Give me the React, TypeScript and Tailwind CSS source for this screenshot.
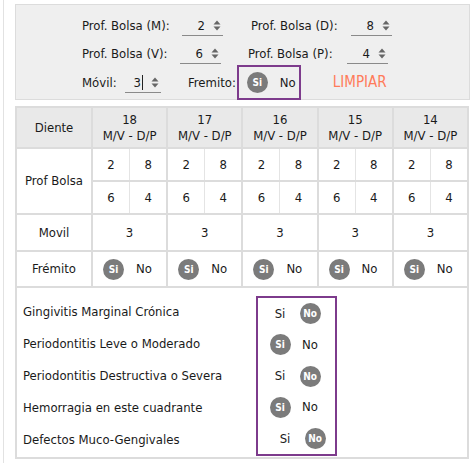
import React from "react";

const FONT = { fontFamily: '"DejaVu Sans Condensed", "DejaVu Sans", "Liberation Sans", sans-serif' };

const Spinner = () => (
  <svg width="8" height="11" viewBox="0 0 8 11" className="shrink-0">
    <path d="M4 0.5 L7.5 4.5 H0.5 Z" fill="#666" />
    <path d="M4 10.5 L7.5 6.5 H0.5 Z" fill="#666" />
  </svg>
);

const NumInput = ({ value, width, caret }: { value: string; width: string; caret?: boolean }) => (
  <div className={`flex items-center justify-end gap-[8px] border-b border-[#8a8a8a] h-[20px] pr-[2px] ${width}`}>
    <span className="flex items-center">
      {value}
      {caret && <span className="inline-block w-[1px] h-[15px] bg-[#222] ml-[1px]" />}
    </span>
    <Spinner />
  </div>
);

const Dot = ({ label }: { label: string }) => (
  <span className="w-[21px] h-[21px] rounded-full bg-[#7b7b7b] text-white text-[10px] font-bold flex items-center justify-center">
    {label}
  </span>
);

// Si / No toggle: the chosen option is drawn inside a grey disc
const SiNo = ({ value, cell = "w-[30px]" }: { value: "si" | "no"; cell?: string }) => (
  <div className="flex items-center">
    <span className={`${cell} flex justify-center`}>{value === "si" ? <Dot label="Si" /> : "Si"}</span>
    <span className={`${cell} flex justify-center`}>{value === "no" ? <Dot label="No" /> : "No"}</span>
  </div>
);

const teeth = ["18", "17", "16", "15", "14"];

const diagnosticos: { label: string; value: "si" | "no"; shift?: boolean }[] = [
  { label: "Gingivitis Marginal Crónica", value: "no" },
  { label: "Periodontitis Leve o Moderado", value: "si" },
  { label: "Periodontitis Destructiva o Severa", value: "no" },
  { label: "Hemorragia en este cuadrante", value: "si" },
  { label: "Defectos Muco-Gengivales", value: "no", shift: true },
];

export default function App() {
  return (
    <div className="bg-white min-h-[463px] w-[474px] text-[13px] text-[#1a1a1a]" style={FONT}>
      <div className="ml-[3px] border-l border-[#e2e2e2] pl-[11px] pt-[4px] pb-[5px] w-[467px]">
        {/* filtros */}
        <div className="bg-[#efefef] border border-[#dcdcdc] w-[455px] h-[96px] pl-[66px] pt-[10px] flex flex-col">
          <div className="flex items-center h-[22px]">
            <span className="w-[90px]">Prof. Bolsa (M):</span>
            <div className="ml-[10px]"><NumInput value="2" width="w-[41px]" /></div>
            <span className="ml-[28px] w-[90px]">Prof. Bolsa (D):</span>
            <div className="ml-[10px]"><NumInput value="8" width="w-[41px]" /></div>
          </div>
          <div className="flex items-center h-[22px] mt-[6px]">
            <span className="w-[88px]">Prof. Bolsa (V):</span>
            <div className="ml-[10px]"><NumInput value="6" width="w-[41px]" /></div>
            <span className="ml-[27px] w-[89px]">Prof. Bolsa (P):</span>
            <div className="ml-[10px]"><NumInput value="4" width="w-[41px]" /></div>
          </div>
          <div className="flex items-end mt-auto -mb-[1px]">
            <span className="w-[33px] mb-[8px]">Móvil:</span>
            <div className="ml-[10px] mb-[7px]"><NumInput value="3" width="w-[36px]" caret /></div>
            <span className="ml-[27px] mb-[8px]">Fremito:</span>
            <div className="ml-[1px] border-2 border-[#7d3b8c] h-[35px] w-[64px] flex items-center pl-[8px]">
              <Dot label="Si" />
              <span className="ml-[12px]">No</span>
            </div>
            <span className="ml-[32px] mb-[7px] text-[15px] text-[#ff7b5a]">LIMPIAR</span>
          </div>
        </div>

        {/* tabla por diente */}
        <table className="mt-[6px] w-[454px] table-fixed border-collapse border-2 border-[#dcdcdc] text-center">
          <colgroup>
            <col className="w-[76px]" />
            {teeth.map((t) => (
              <col key={t} />
            ))}
          </colgroup>
          <thead>
            <tr className="bg-[#e9e9e9] h-[41px]">
              <th className="font-normal border-2 border-[#dcdcdc]">Diente</th>
              {teeth.map((t) => (
                <th key={t} className="font-normal border-2 border-[#dcdcdc] leading-[16px]">
                  {t}
                  <br />
                  M/V - D/P
                </th>
              ))}
            </tr>
          </thead>
          <tbody>
            <tr className="h-[32px]">
              <td rowSpan={2} className="border-2 border-[#dcdcdc]">Prof Bolsa</td>
              {teeth.map((t) => (
                <td key={t} className="border-2 border-[#dcdcdc] p-0">
                  <div className="flex h-[31px]">
                    <span className="flex-1 flex items-center justify-center border-r border-[#e4e4e4]">2</span>
                    <span className="flex-1 flex items-center justify-center">8</span>
                  </div>
                </td>
              ))}
            </tr>
            <tr className="h-[32px]">
              {teeth.map((t) => (
                <td key={t} className="border-2 border-[#dcdcdc] p-0">
                  <div className="flex h-[31px]">
                    <span className="flex-1 flex items-center justify-center border-r border-[#e4e4e4]">6</span>
                    <span className="flex-1 flex items-center justify-center">4</span>
                  </div>
                </td>
              ))}
            </tr>
            <tr className="h-[37px]">
              <td className="border-2 border-[#dcdcdc]">Movil</td>
              {teeth.map((t) => (
                <td key={t} className="border-2 border-[#dcdcdc]">3</td>
              ))}
            </tr>
            <tr className="h-[36px]">
              <td className="border-2 border-[#dcdcdc]">Frémito</td>
              {teeth.map((t) => (
                <td key={t} className="border-2 border-[#dcdcdc] p-0">
                  <div className="flex items-center pl-[10px]">
                    <Dot label="Si" />
                    <span className="ml-[12px]">No</span>
                  </div>
                </td>
              ))}
            </tr>
          </tbody>
        </table>

        {/* diagnósticos */}
        <div className="w-[454px] h-[171px] border-2 border-t-0 border-[#dcdcdc] flex pl-[6px] pt-[8px]">
          <div className="w-[233px] flex flex-col">
            {diagnosticos.map((d) => (
              <div key={d.label} className="h-[32px] flex items-center">{d.label}</div>
            ))}
          </div>
          <div className="w-[81px] h-[160px] border-2 border-[#7d3b8c] flex flex-col pl-[7px]">
            {diagnosticos.map((d) => (
              <div key={d.label} className={`h-[32px] flex items-center ${d.shift ? "pl-[5px]" : ""}`}>
                <SiNo value={d.value} />
              </div>
            ))}
          </div>
        </div>
      </div>
    </div>
  );
}
